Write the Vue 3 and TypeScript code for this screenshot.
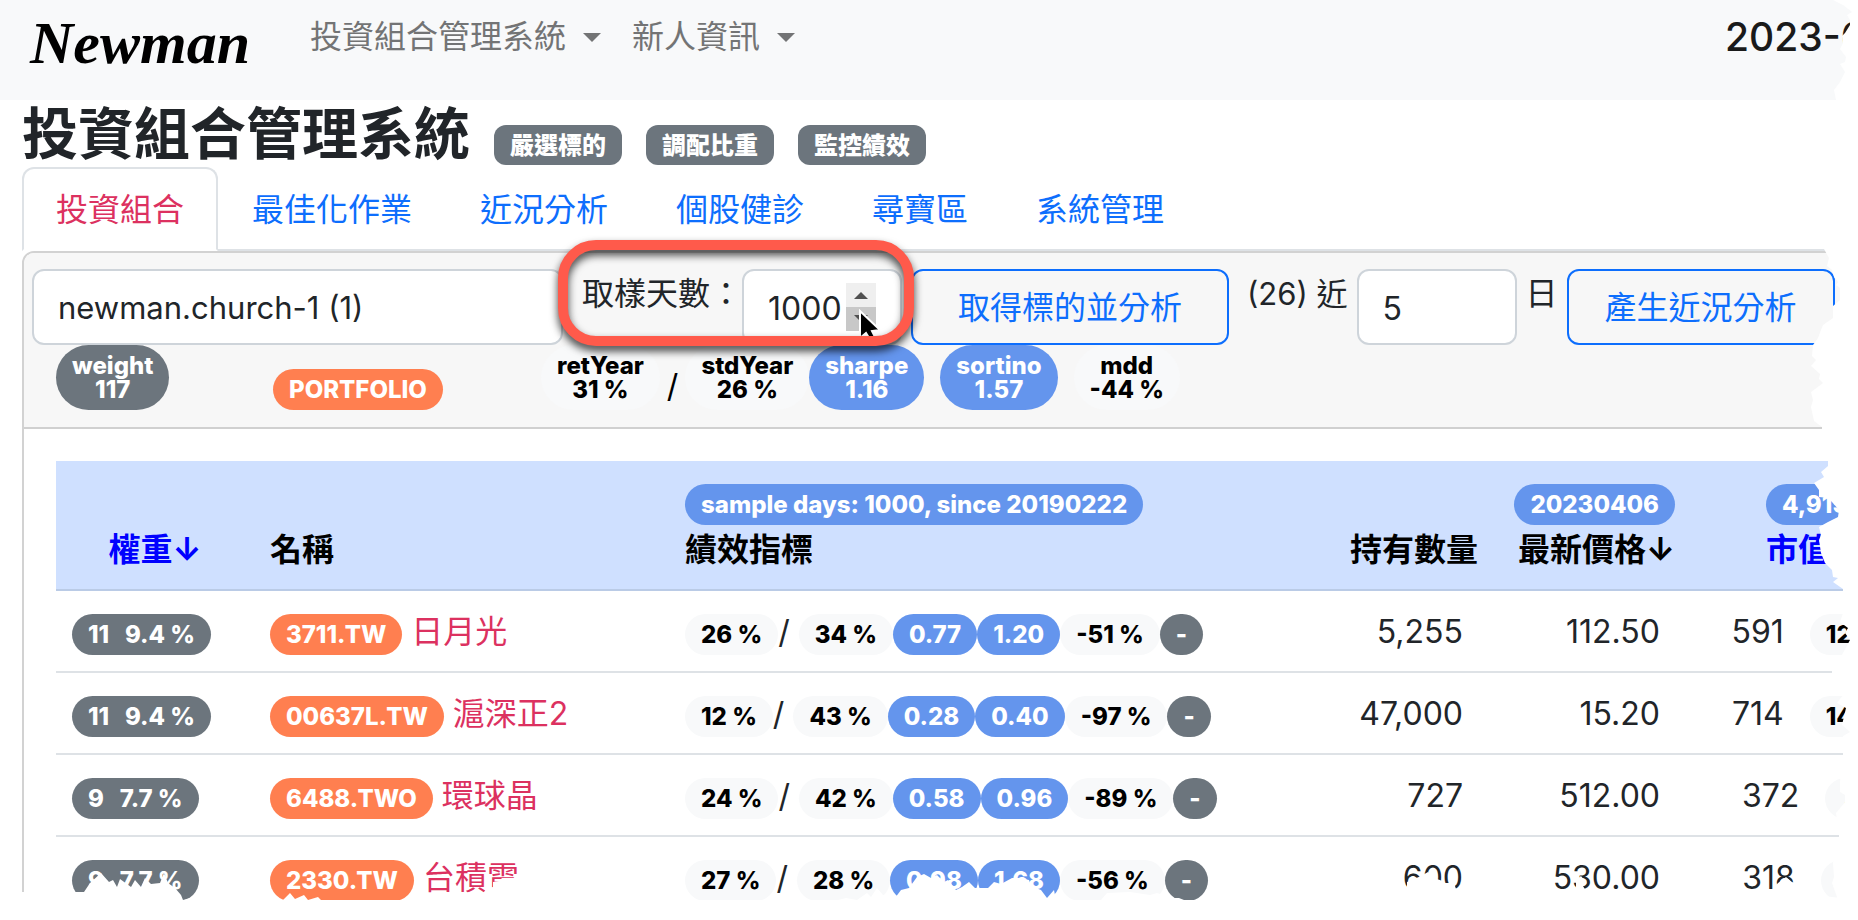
<script setup lang="ts">
import { ref } from 'vue'

interface Holding {
  shares: number
  weight: string
  code: string
  name: string
  ret: string
  std: string
  sharpe: string
  sortino: string
  mdd: string
  quantity: string
  price: string
  value: string
  ratio: string
}

const menus = ['投資組合管理系統', '新人資訊']
const features = ['嚴選標的', '調配比重', '監控績效']
const tabs = ['投資組合', '最佳化作業', '近況分析', '個股健診', '尋寶區', '系統管理']
const activeTab = ref(0)
const sampleDays = ref('1000')
const recentDays = ref('5')

const holdings: Holding[] = [
  { shares: 11, weight: '9.4 %', code: '3711.TW', name: '日月光', ret: '26 %', std: '34 %', sharpe: '0.77', sortino: '1.20', mdd: '-51 %', quantity: '5,255', price: '112.50', value: '591', ratio: '12.0 %' },
  { shares: 11, weight: '9.4 %', code: '00637L.TW', name: '滬深正2', ret: '12 %', std: '43 %', sharpe: '0.28', sortino: '0.40', mdd: '-97 %', quantity: '47,000', price: '15.20', value: '714', ratio: '14.5 %' },
  { shares: 9, weight: '7.7 %', code: '6488.TWO', name: '環球晶', ret: '24 %', std: '42 %', sharpe: '0.58', sortino: '0.96', mdd: '-89 %', quantity: '727', price: '512.00', value: '372', ratio: '7.6 %' },
  { shares: 9, weight: '7.7 %', code: '2330.TW', name: '台積電', ret: '27 %', std: '28 %', sharpe: '0.98', sortino: '1.68', mdd: '-56 %', quantity: '600', price: '530.00', value: '318', ratio: '6.5 %' },
]
</script>

<template>
  <div class="page">
    <header class="navbar">
      <a class="brand" href="#">Newman</a>
      <nav class="menus">
        <button v-for="menu in menus" :key="menu" class="menu" type="button">
          {{ menu }}<span class="caret"></span>
        </button>
      </nav>
      <span class="date">2023-0</span>
    </header>

    <main class="content">
      <div class="title-row">
        <h1>投資組合管理系統</h1>
        <span v-for="feature in features" :key="feature" class="badge square gray">{{ feature }}</span>
      </div>

      <nav class="tabs">
        <a
          v-for="(tab, i) in tabs"
          :key="tab"
          href="#"
          class="tab"
          :class="{ active: i === activeTab }"
          @click.prevent="activeTab = i"
        >{{ tab }}</a>
      </nav>

      <section class="card">
        <div class="card-header">
          <form class="controls" @submit.prevent>
            <select class="control portfolio" aria-label="portfolio">
              <option>newman.church-1 (1)</option>
            </select>
            <div class="sample">
              <label for="sample-days">取樣天數：</label>
              <input id="sample-days" v-model="sampleDays" class="control days" type="text" inputmode="numeric" />
              <svg class="spinner" viewBox="0 0 30 48" aria-hidden="true">
                <rect width="30" height="24" fill="#efefef" />
                <rect y="24" width="30" height="24" fill="#c8c8c8" />
                <path d="M8 16 15 9l7 7z" fill="#505050" />
                <path d="M8 32h14l-7 7z" fill="#505050" />
              </svg>
              <svg class="pointer" viewBox="0 0 24 32" aria-hidden="true">
                <path d="M2 2v27l6-5 5 8h6l-5-10 8-1z" fill="#000" stroke="#fff" stroke-width="2" />
              </svg>
              <span class="ring"></span>
            </div>
            <button class="outline fetch" type="button">取得標的並分析</button>
            <label class="recent-label" for="recent-days">(26) 近</label>
            <input id="recent-days" v-model="recentDays" class="control days" type="text" inputmode="numeric" />
            <span class="unit">日</span>
            <button class="outline recent" type="button">產生近況分析</button>
          </form>

          <div class="summary">
            <div><span class="badge gray">weight<br />117</span></div>
            <div><span class="badge coral">PORTFOLIO</span></div>
            <div class="stats">
              <span class="badge light">retYear<br />31 %</span>
              <span class="slash">/</span>
              <span class="badge light">stdYear<br />26 %</span>
              <span class="badge blue">sharpe<br />1.16</span>
              <span class="badge blue spaced">sortino<br />1.57</span>
              <span class="badge light spaced">mdd<br />-44 %</span>
            </div>
          </div>
        </div>

        <div class="card-body">
          <table>
            <colgroup>
              <col class="c-weight" />
              <col class="c-name" />
              <col />
              <col class="c-quantity" />
              <col class="c-price" />
              <col class="c-value" />
            </colgroup>
            <thead>
              <tr>
                <th class="center"><a href="#">權重↓</a></th>
                <th>名稱</th>
                <th><span class="badge blue">sample days: 1000, since 20190222</span><br />績效指標</th>
                <th class="right">持有數量</th>
                <th class="right"><span class="badge blue">20230406</span><br />最新價格↓</th>
                <th class="value-head"><span class="badge blue">4,915</span><br /><a href="#">市值↓</a></th>
              </tr>
            </thead>
            <tbody>
              <tr v-for="row in holdings" :key="row.code">
                <td><span class="badge gray">{{ row.shares }}&nbsp;&nbsp;&nbsp;{{ row.weight }}</span></td>
                <td><span class="badge coral">{{ row.code }}</span>&nbsp;<a class="stock" href="#">{{ row.name }}</a></td>
                <td>
                  <span class="badge light">{{ row.ret }}</span>/&nbsp;<span class="badge light">{{ row.std }}</span><span class="badge blue">{{ row.sharpe }}</span><span class="badge blue">{{ row.sortino }}</span><span class="badge light">{{ row.mdd }}</span><span class="badge gray">-</span>
                </td>
                <td class="number">{{ row.quantity }}</td>
                <td class="number">{{ row.price }}</td>
                <td class="right">{{ row.value }}<span class="badge light ratio">{{ row.ratio }}</span></td>
              </tr>
            </tbody>
          </table>
        </div>
      </section>
    </main>

    <svg class="tear-right" viewBox="1798 0 60 920" aria-hidden="true">
      <path fill="#fff" d="M1833 0 1843 5 1852 12 1847 15 1850 20 1850 25 1845 33 1842 36 1843 43 1840 49 1846 57 1845 62 1840 64 1845 72 1840 82 1834 90 1836 100 1824 105V249L1829 258 1827 266 1832 270 1834 277 1838 282 1836 285 1840 288V300L1833 306V318L1823 325 1821 330 1818 338 1813 345 1812 356 1816 360 1811 366 1820 374 1819 379 1823 383 1811 392 1813 400 1811 407 1814 421 1822 427V429L1828 440V466L1821 472 1824 477 1814 483 1819 490V497L1828 498 1832 502 1839 510 1838 517 1828 522 1819 527 1821 535 1819 540 1821 553 1825 563 1832 570 1833 577 1838 578 1833 582 1843 589V613L1840 622 1848 628 1845 633 1850 640 1843 653 1832 671V675L1843 695 1837 703 1846 708 1842 725 1850 732 1843 736V755L1840 782V792L1845 795V802L1836 813 1839 835V840L1833 863 1834 877 1832 883 1837 897V920H1858V0z" />
    </svg>
    <svg class="tear-bottom" viewBox="0 860 1858 60" aria-hidden="true">
      <path fill="#fff" d="M0 892H84L90 883 101 873 109 882 113 880 117 887 120 879 131 887 135 880 141 887 145 878 151 884 160 883 164 873 168 883 175 888 181 895 183 900 190 898 192 900H283L290 893 295 899 304 895 308 900 318 897 321 900H478L487 888 493 887V882L499 881 502 878H520V900H838L846 898 857 900 867 893 871 897 877 888 883 895 895 898 901 890 909 888 917 877 924 874 931 878 937 875 944 882 948 880 956 890 962 887 969 882 975 888H988L994 882 1001 884 1012 878 1020 878 1029 880 1031 886 1041 890 1047 898 1054 890 1056 900H1101L1107 893 1130 892 1150 895 1157 893 1172 898H1179L1184 900H1407V882L1421 876 1428 872 1433 878 1440 880 1445 883H1454L1456 889 1462 893H1576V880L1581 876 1585 881 1583 886 1587 893H1774V888L1778 883 1782 880 1786 877 1792 882 1798 884V893L1858 900V920H0z" />
    </svg>
  </div>
</template>

<style>
body {
  margin: 0;
  background: #fff;
}
</style>

<style scoped>
.page {
  position: relative;
  height: 100vh;
  overflow: hidden;
  background: #fff;
  color: #212529;
  font-family: Inter, "Noto Sans CJK TC", sans-serif;
  font-size: 32px;
  line-height: 48px;
}
.page * {
  box-sizing: border-box;
}
a {
  text-decoration: none;
}
button,
input,
select {
  font: inherit;
  margin: 0;
}
.navbar {
  display: flex;
  align-items: flex-start;
  padding: 13px 0 27px 30px;
  background: #f8f9fa;
}
.brand {
  color: #000;
  font: italic bold 60px/60px "Liberation Serif", serif;
}
.menus {
  display: flex;
  gap: 31px;
  margin-left: 60px;
}
.menu {
  display: flex;
  align-items: center;
  padding: 0;
  border: 0;
  background: none;
  color: #737475;
}
.caret {
  margin-left: 17px;
  border: 9px solid transparent;
  border-top-color: #737475;
  border-bottom: 0;
}
.date {
  width: 133px;
  margin-left: auto;
  color: #1a1a1a;
  font-size: 39px;
  font-weight: 500;
  white-space: nowrap;
}
.content {
  margin-right: -114px;
  padding-left: 22px;
}
.title-row {
  display: flex;
  align-items: baseline;
  gap: 24px;
  padding-top: 1px;
}
h1 {
  margin: 0;
  font-size: 56px;
  font-weight: 700;
  line-height: 66px;
}
.badge {
  display: inline-block;
  padding: 9px 16px 8px;
  border-radius: 33px;
  color: #fff;
  font-size: 24px;
  font-weight: 800;
  line-height: 24px;
  text-align: center;
  white-space: nowrap;
}
.square {
  padding-bottom: 7px;
  border-radius: 12px;
}
.gray {
  background: #6c757d;
}
.coral {
  background: #ff7f50;
}
.blue {
  background: #6495ed;
}
.light {
  background: #f8f9fa;
  color: #000;
}
.tabs {
  display: flex;
  border-bottom: 2px solid #dee2e6;
}
.tab {
  margin-bottom: -2px;
  padding: 17px 32px 15px;
  border: 2px solid transparent;
  border-radius: 12px 12px 0 0;
  color: #0d6efd;
}
.tab.active {
  border-color: #dee2e6 #dee2e6 #fff;
  background: #fff;
  color: #dc3160;
}
.card {
  border: 2px solid #d2d2d2;
  border-radius: 12px;
}
.card-header {
  padding: 16px 8px 17px;
  border-bottom: 2px solid #d0d0d0;
  border-radius: 10px 10px 0 0;
  background: #f7f7f7;
}
.controls {
  display: flex;
  align-items: flex-start;
  gap: 9px;
  line-height: 50px;
}
.control {
  height: 76px;
  padding: 13px 24px 11px;
  border: 2px solid #ced4da;
  border-radius: 12px;
  outline: 0;
  background: #fff;
  color: #212529;
  line-height: 48px;
  appearance: none;
}
.portfolio {
  width: 531px;
  margin-right: 10px;
  font-size: 31px;
}
.days {
  width: 160px;
}
.sample {
  position: relative;
  display: flex;
}
.spinner {
  position: absolute;
  top: 14px;
  right: 26px;
  width: 30px;
  height: 48px;
}
.pointer {
  position: absolute;
  top: 40px;
  right: 20px;
  width: 24px;
  height: 32px;
}
.ring {
  position: absolute;
  inset: -29px -12px -1px -24px;
  border: 10px solid #ff5a4b;
  border-radius: 38px;
  filter: drop-shadow(0 5px 4px rgba(0, 0, 0, 0.75));
  pointer-events: none;
}
.outline {
  height: 76px;
  border: 2px solid #0d6efd;
  border-radius: 12px;
  background: transparent;
  color: #0d6efd;
  white-space: nowrap;
}
.fetch {
  padding: 2px 45px 0;
}
.recent {
  padding: 2px 36px 0;
}
.recent-label {
  margin-left: 9px;
  font-size: 31px;
  white-space: nowrap;
}
.summary {
  display: grid;
  grid-template-columns: 217px 268px auto;
  align-items: end;
  margin-left: 24px;
}
.summary > div {
  display: flex;
}
.summary .stats {
  align-items: flex-end;
}
.slash {
  margin: 0 7px;
  color: #000;
}
.spaced {
  margin-left: 16px;
}
.card-body {
  padding: 32px;
}
table {
  width: 100%;
  border-collapse: separate;
  border-spacing: 0;
  table-layout: fixed;
}
.c-weight {
  width: 198px;
}
.c-name {
  width: 415px;
}
.c-quantity {
  width: 163px;
}
.c-price {
  width: 197px;
}
.c-value {
  width: 247px;
}
th,
td {
  padding: 17px 16px 15px;
  text-align: left;
  white-space: nowrap;
}
th {
  border-bottom: 2px solid #bacbe6;
  background: #cfe0ff;
  color: #000;
  font-weight: 700;
  vertical-align: bottom;
}
th a {
  color: #00f;
}
td {
  border-bottom: 2px solid #dee2e6;
}
.center {
  text-align: center;
}
.right {
  text-align: right;
}
.number {
  padding-right: 31px;
  text-align: right;
}
.value-head {
  padding-left: 75px;
}
.ratio {
  margin-left: 26px;
}
.stock {
  color: #dc3160;
}
.tear-right {
  position: absolute;
  top: 0;
  right: 0;
  width: 60px;
  height: 920px;
}
.tear-bottom {
  position: absolute;
  top: 860px;
  left: 0;
  width: 1858px;
  height: 60px;
}
</style>
